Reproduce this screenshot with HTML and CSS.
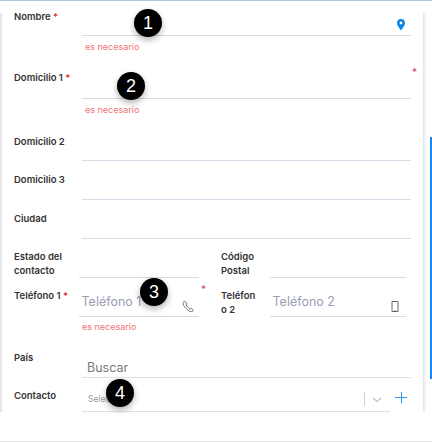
FILE: index.html
```html
<!DOCTYPE html>
<html lang="es">
<head>
<meta charset="utf-8">
<title>Contacto</title>
<link rel="stylesheet" href="styles.css">
</head>
<body>
<div class="frame">
  <div class="rail rail-left"></div>
  <div class="rail rail-right"></div>
  <div class="scrollbar"></div>
  <span class="stray">*</span>
  <form class="form">
    <div class="row r-nombre">
      <label class="label">Nombre <i>*</i></label>
      <div class="field">
        <svg class="icon pin" width="10" height="12" viewBox="0 0 10 12"><path fill="#0a84e6" fill-rule="evenodd" d="M5 0C2.4 0 1 1.8 1 3.9 1 6.4 3.6 8.9 5 11.5 6.4 8.9 9 6.4 9 3.9 9 1.8 7.6 0 5 0Zm0 2.6a1.4 1.4 0 1 1 0 2.8 1.4 1.4 0 0 1 0-2.8Z"/></svg>
      </div>
    </div>
    <p class="error">es necesario</p>
    <div class="row r-dom1">
      <label class="label">Domicilio 1 <i>*</i></label>
      <div class="field"></div>
    </div>
    <p class="error">es necesario</p>
    <div class="row r-dom2">
      <label class="label">Domicilio 2</label>
      <div class="field"></div>
    </div>
    <div class="row r-std">
      <label class="label">Domicilio 3</label>
      <div class="field"></div>
    </div>
    <div class="row r-std">
      <label class="label">Ciudad</label>
      <div class="field"></div>
    </div>
    <div class="pair r-estado">
      <label class="label">Estado del contacto</label>
      <div class="field"></div>
      <label class="label label-b">Código Postal</label>
      <div class="field"></div>
    </div>
    <div class="pair r-tel">
      <label class="label">Teléfono 1 <i>*</i></label>
      <div class="field">
        <span class="ph">Teléfono 1</span>
        <svg class="icon phone" width="13" height="13" viewBox="0 0 13 13"><path fill="none" stroke="#555" stroke-width=".8" d="M2.2 1.2 1.2 2.4c-.5 1.4.8 4 2.6 5.9 2 2 4.4 3.6 6.3 3.4l1.5-1.4-2.4-2-1.3.9C6.500 8 4.700 6.200 4.100 4.900l1-1.300Z"/></svg>
      </div>
      <span class="mark">*</span>
      <label class="label label-b">Teléfon<br>o 2</label>
      <div class="field">
        <span class="ph">Teléfono 2</span>
        <svg class="icon mobile" width="8" height="11" viewBox="0 0 8 11"><path fill="none" stroke="#666" d="M1 .5h6v10H1z"/><path stroke="#666" d="M3.500 9.500h1"/></svg>
      </div>
    </div>
    <p class="error error-tel">es necesario</p>
    <div class="row r-pais">
      <label class="label">País</label>
      <div class="field field-soft"><span class="ph ph-search">Buscar</span></div>
    </div>
    <div class="row r-contacto">
      <label class="label">Contacto</label>
      <div class="select-wrap">
        <div class="field field-soft select">
          <span class="select-ph">Seleccione</span>
          <span class="divider"></span>
          <svg class="chev" width="10" height="6" viewBox="0 0 10 6"><path fill="none" stroke="#c4c4c4" stroke-width="1.300" d="M1 1l4 3.500L9 1"/></svg>
        </div>
        <span class="plus"></span>
      </div>
    </div>
  </form>
  <span class="step s1">1</span>
  <span class="step s2">2</span>
  <span class="step s3">3</span>
  <span class="step s4">4</span>
</div>
</body>
</html>
```

FILE: styles.css
```css
* { box-sizing: border-box; }
html, body { margin: 0; padding: 0; background: #fff; overflow: hidden; }
.frame {
  position: relative;
  width: 432px;
  height: 442px;
  border-top: 1px solid #b6c5e6;
  border-bottom: 1px solid #e2e2e2;
  font-family: Inter, "Liberation Sans", sans-serif;
}
.rail { position: absolute; top: 12px; height: 399px; }
.rail-left { left: 0; width: 2px; background: #e6e6e6; }
.rail-right { left: 423px; width: 3px; background: linear-gradient(90deg, #e2e2e2, #fafafa); }
.scrollbar { position: absolute; left: 430px; top: 136px; width: 2px; height: 242px; background: #1587f5; }
.stray { position: absolute; left: 412px; top: 65px; font-size: 10px; line-height: 12px; color: #c9485b; }

.form { padding-left: 14px; }
.row { display: grid; grid-template-columns: 68px 329px; }
.pair { display: grid; grid-template-columns: 65px 120px 22px 49px 136px; }
.label {
  font-size: 9.500px;
  font-weight: 600;
  line-height: 14px;
  color: #333;
}
.label i { font-style: normal; color: #e8192c; }
.label-b { grid-column: 4; }
.field {
  position: relative;
  border-bottom: 1px solid #d8d8e6;
}
.field-soft { border-bottom-color: #e2e2e2; }

.r-nombre { height: 35px; }
.r-nombre .label { margin-top: 9px; }
.r-dom1 { height: 39px; }
.r-dom1 .label { margin-top: 11px; }
.r-dom2 { height: 38px; }
.r-dom2 .label { margin-top: 12px; }
.r-std { height: 39px; }
.r-std .label { margin-top: 12px; }
.r-estado { height: 38px; }
.r-estado .label { margin-top: 11px; }
.r-tel { height: 39px; }
.r-tel .label { margin-top: 12px; }
.error {
  margin: 0;
  height: 24px;
  padding: 5px 0 0 71px;
  font-size: 9px;
  line-height: 12px;
  color: #f07474;
}
.error-tel { padding-left: 68px; }
.r-pais { height: 38px; }
.r-pais .label { margin-top: 11px; }
.r-contacto { height: 34px; }
.r-contacto .label { margin-top: 11px; }

.ph {
  position: absolute;
  left: 2.500px;
  bottom: 6px;
  font-size: 12.500px;
  line-height: 16px;
  color: #9b9db5;
}
.ph-search { left: 5px; bottom: 1px; color: #7a7a7a; }
.icon { position: absolute; }
.pin { right: 5px; top: 18px; }
.phone { right: 4px; bottom: 3px; }
.mobile { right: 7px; bottom: 4px; }
.mark {
  font-size: 10px;
  line-height: 12px;
  color: #c9485b;
  padding: 6px 0 0 2px;
}

.select-wrap { display: flex; align-items: flex-start; }
.select {
  display: flex;
  align-items: center;
  width: 308px;
  height: 34px;
  padding: 9px 0 0 6px;
}
.select-ph { flex: 1; font-size: 8.500px; color: #999; }
.divider { width: 1px; height: 14px; background: #cfcfcf; }
.chev { margin: 2px 8px 0 7px; }
.plus {
  width: 12px;
  height: 11px;
  margin: 14px 0 0 5px;
  background:
    linear-gradient(#2f97f0, #2f97f0) center / 12px 1px no-repeat,
    linear-gradient(#2f97f0, #2f97f0) center / 1px 11px no-repeat;
}

.step {
  position: absolute;
  width: 28px;
  height: 28px;
  border-radius: 50%;
  background: #000;
  color: #fff;
  font-family: "Liberation Sans", sans-serif;
  font-size: 18px;
  line-height: 28px;
  text-align: center;
  box-shadow: 0 3px 6px rgba(0, 0, 0, .3);
}
.s1 { left: 134px; top: 8px; }
.s2 { left: 117px; top: 71px; }
.s3 { left: 140px; top: 277px; }
.s4 { left: 106px; top: 378px; }
```
